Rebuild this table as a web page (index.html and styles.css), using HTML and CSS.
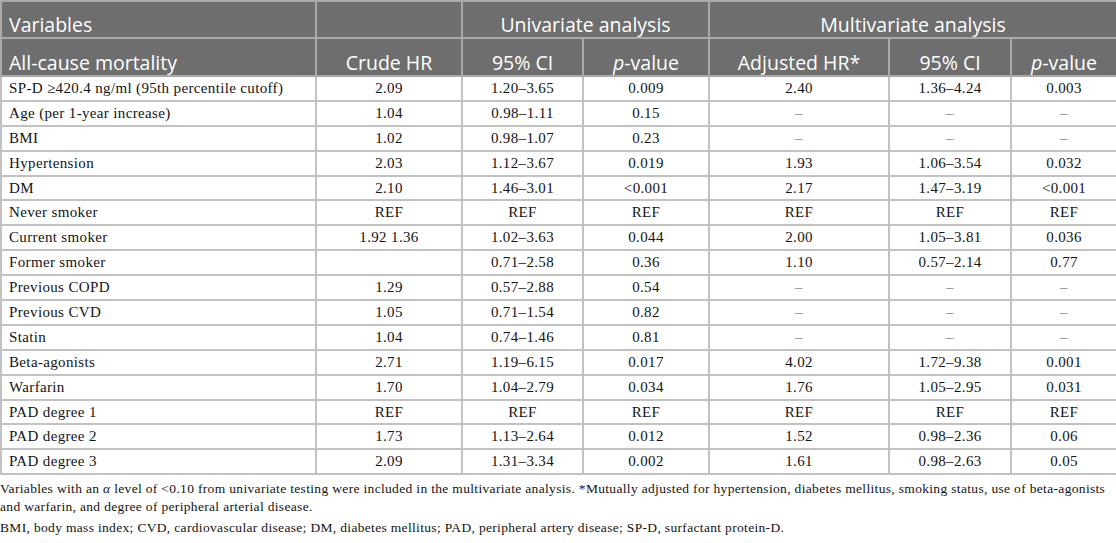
FILE: index.html
```html
<!DOCTYPE html>
<html lang="en">
<head>
    <meta charset="UTF-8">
    <title>SP-D and all-cause mortality</title>
    <link rel="stylesheet" href="styles.css">
</head>
<body>
    <table class="hr-table">
        <colgroup>
            <col class="c-var">
            <col class="c-crude">
            <col class="c-ci">
            <col class="c-p">
            <col class="c-adj">
            <col class="c-ci2">
            <col class="c-p2">
        </colgroup>
        <thead>
            <tr>
                <th class="left">Variables</th>
                <th></th>
                <th colspan="2">Univariate analysis</th>
                <th colspan="3">Multivariate analysis</th>
            </tr>
            <tr>
                <th class="left">All-cause mortality</th>
                <th>Crude HR</th>
                <th>95% CI</th>
                <th><i>p</i>-value</th>
                <th>Adjusted HR*</th>
                <th>95% CI</th>
                <th><i>p</i>-value</th>
            </tr>
        </thead>
        <tbody>
            <tr><td class="left">SP-D ≥420.4 ng/ml (95th percentile cutoff)</td><td>2.09</td><td>1.20–3.65</td><td>0.009</td><td>2.40</td><td>1.36–4.24</td><td>0.003</td></tr>
            <tr><td class="left">Age (per 1-year increase)</td><td>1.04</td><td>0.98–1.11</td><td>0.15</td><td class="dash">–</td><td class="dash">–</td><td class="dash">–</td></tr>
            <tr><td class="left">BMI</td><td>1.02</td><td>0.98–1.07</td><td>0.23</td><td class="dash">–</td><td class="dash">–</td><td class="dash">–</td></tr>
            <tr><td class="left">Hypertension</td><td>2.03</td><td>1.12–3.67</td><td>0.019</td><td>1.93</td><td>1.06–3.54</td><td>0.032</td></tr>
            <tr><td class="left">DM</td><td>2.10</td><td>1.46–3.01</td><td>&lt;0.001</td><td>2.17</td><td>1.47–3.19</td><td>&lt;0.001</td></tr>
            <tr><td class="left">Never smoker</td><td>REF</td><td>REF</td><td>REF</td><td>REF</td><td>REF</td><td>REF</td></tr>
            <tr><td class="left">Current smoker</td><td>1.92 1.36</td><td>1.02–3.63</td><td>0.044</td><td>2.00</td><td>1.05–3.81</td><td>0.036</td></tr>
            <tr><td class="left">Former smoker</td><td></td><td>0.71–2.58</td><td>0.36</td><td>1.10</td><td>0.57–2.14</td><td>0.77</td></tr>
            <tr><td class="left">Previous COPD</td><td>1.29</td><td>0.57–2.88</td><td>0.54</td><td class="dash">–</td><td class="dash">–</td><td class="dash">–</td></tr>
            <tr><td class="left">Previous CVD</td><td>1.05</td><td>0.71–1.54</td><td>0.82</td><td class="dash">–</td><td class="dash">–</td><td class="dash">–</td></tr>
            <tr><td class="left">Statin</td><td>1.04</td><td>0.74–1.46</td><td>0.81</td><td class="dash">–</td><td class="dash">–</td><td class="dash">–</td></tr>
            <tr><td class="left">Beta-agonists</td><td>2.71</td><td>1.19–6.15</td><td>0.017</td><td>4.02</td><td>1.72–9.38</td><td>0.001</td></tr>
            <tr><td class="left">Warfarin</td><td>1.70</td><td>1.04–2.79</td><td>0.034</td><td>1.76</td><td>1.05–2.95</td><td>0.031</td></tr>
            <tr><td class="left">PAD degree 1</td><td>REF</td><td>REF</td><td>REF</td><td>REF</td><td>REF</td><td>REF</td></tr>
            <tr><td class="left">PAD degree 2</td><td>1.73</td><td>1.13–2.64</td><td>0.012</td><td>1.52</td><td>0.98–2.36</td><td>0.06</td></tr>
            <tr><td class="left">PAD degree 3</td><td>2.09</td><td>1.31–3.34</td><td>0.002</td><td>1.61</td><td>0.98–2.63</td><td>0.05</td></tr>
        </tbody>
    </table>

    <div class="notes">
        <p>Variables with an <i>α</i> level of &lt;0.10 from univariate testing were included in the multivariate analysis. *Mutually adjusted for hypertension, diabetes mellitus, smoking status, use of <span class="nobr">beta-agonists</span> and warfarin, and degree of peripheral arterial disease.</p>
        <p>BMI, body mass index; CVD, cardiovascular disease; DM, diabetes mellitus; PAD, peripheral artery disease; SP-D, surfactant protein-D.</p>
    </div>
</body>
</html>
```

FILE: styles.css
```css
* { margin: 0; padding: 0; box-sizing: border-box; }
body {
    font-family: 'Liberation Serif', 'DejaVu Serif', serif;
    background: white;
    color: #141414;
}
.hr-table {
    width: 1116px;
    table-layout: fixed;
    border-collapse: collapse;
    border: 2px solid #bdbdbd;
}
.c-var { width: 315px; }
.c-crude { width: 146px; }
.c-ci { width: 121px; }
.c-p { width: 126px; }
.c-adj { width: 180px; }
.c-ci2 { width: 122px; }
.c-p2 { width: 106px; }

.hr-table th {
    background: #6e6e6e;
    color: white;
    font-family: 'Open Sans', 'Noto Sans', sans-serif;
    font-weight: normal;
    font-size: 19.5px;
    height: 37px;
    padding: 10px 7px 0;
    line-height: 25px;
    text-align: center;
    border: 2px solid #a9a9a9;
    white-space: nowrap;
}
.hr-table thead tr:nth-child(2) th { height: 38px; }
.hr-table td {
    font-size: 15px;
    letter-spacing: 0.35px;
    height: 24.9px;
    padding: 0 7px;
    text-align: center;
    border: 2px solid #c2c2c2;
    white-space: nowrap;
}
.hr-table .left { text-align: left; }
.hr-table .dash { color: #888; }

.notes {
    width: 1108px;
    margin-top: 5px;
    font-size: 13.5px;
    letter-spacing: 0.33px;
    line-height: 18px;
}
.notes .nobr { white-space: nowrap; }
.notes p { margin-bottom: 3px; }
```
